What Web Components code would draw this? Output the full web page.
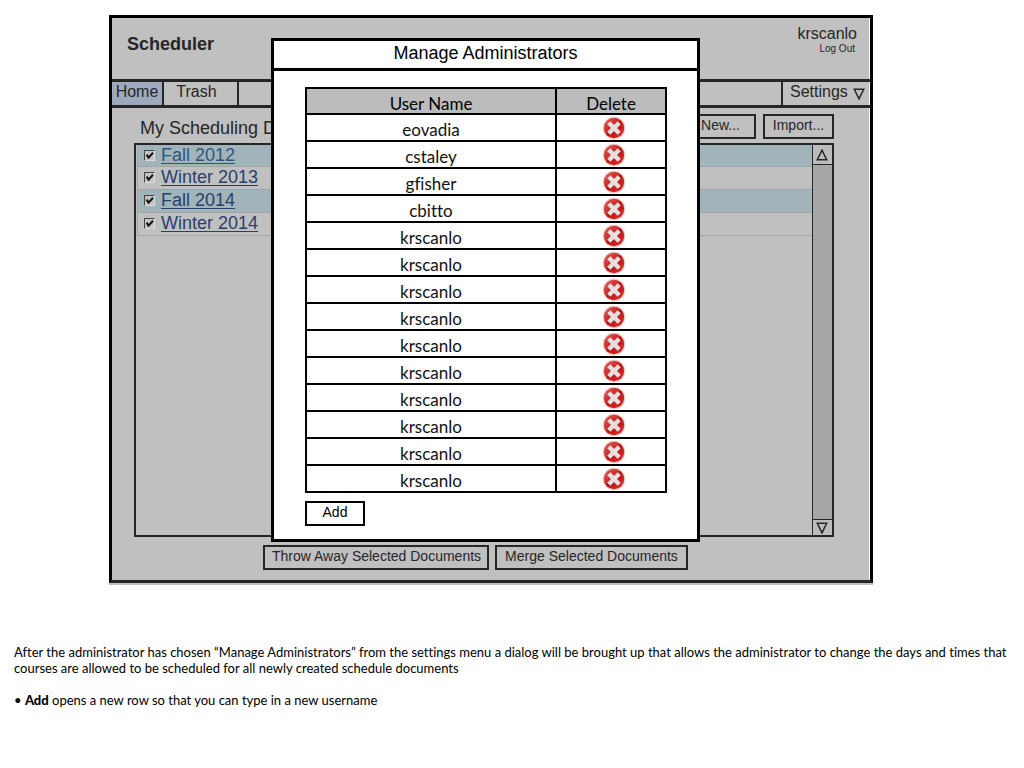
<!DOCTYPE html>
<html lang="en">
<head>
<meta charset="utf-8">
<meta name="viewport" content="width=device-width, initial-scale=1">
<title>Scheduler</title>
<style>
  body { margin: 0; background: #fff; font-family: "Liberation Sans", Arial, sans-serif; }
</style>
</head>
<body>
<scheduler-page></scheduler-page>

<script>
const define = (name, html, setup) => {
  const tpl = document.createElement('template');
  tpl.innerHTML = html;
  customElements.define(name, class extends HTMLElement {
    constructor() {
      super();
      this.attachShadow({ mode: 'open' }).append(tpl.content.cloneNode(true));
    }
    connectedCallback() { if (setup) setup(this, this.shadowRoot); }
  });
};

/* Square outlined push button */
define('box-button', `
<style>
  :host { display: block; }
  button { display: block; box-sizing: border-box; width: 100%; height: 25px; margin: 0; padding: 0 7px 2px;
    border: 2px solid var(--line, #262626); border-radius: 0; background: none; color: inherit;
    font: 14px/19px "Liberation Sans", Arial, sans-serif; white-space: nowrap; }
</style>
<button type="button"><slot></slot></button>`);

/* Triangle used by the menu and the scroll bar */
define('tri-mark', `
<style>
  :host { display: block; width: 12px; height: 12px; }
  :host([up]) svg { transform: rotate(180deg); }
  svg { display: block; width: 100%; height: 100%; }
</style>
<svg viewBox="0 0 12 12" aria-hidden="true"><path d="M1.3 1.3h9.4L6 10.9z" fill="none" stroke="#262626" stroke-width="1.5"/></svg>`);

define('app-header', `
<style>
  :host { display: flex; justify-content: space-between; height: 61px; box-sizing: border-box; padding: 7px 13px 0 15px; color: #262626; }
  h1 { margin: 9px 0 0; font-size: 18px; line-height: 20px; }
  .user { text-align: right; font-size: 16px; line-height: 18px; }
  a { display: block; padding-right: 2px; font-size: 10px; line-height: 12px; color: inherit; text-decoration: none; }
</style>
<h1>Scheduler</h1>
<div class="user">krscanlo<a href="#logout">Log Out</a></div>`);

define('app-nav', `
<style>
  :host { display: flex; height: 23px; border: solid #262626; border-width: 3px 0; font-size: 16px; line-height: 20px; }
  a { box-sizing: border-box; color: #262626; text-decoration: none; text-align: center; border-right: 2px solid #262626; }
  .home { width: 52px; background: #9fa9be; }
  .trash { width: 75px; padding-right: 8px; }
  .settings { display: flex; gap: 5px; margin-left: auto; width: 89px; padding-left: 7px; border-left: 2px solid #262626; border-right: 0; }
  tri-mark { margin-top: 6px; }
</style>
<a class="home" href="#home">Home</a>
<a class="trash" href="#trash">Trash</a>
<a class="settings" href="#settings">Settings<tri-mark></tri-mark></a>`);

define('doc-row', `
<style>
  :host { display: flex; box-sizing: border-box; margin-left: 1px; padding-left: 6px; border: solid #a4a4a4; border-width: 0 0 1px 1px; gap: 6px; }
  :host(:nth-of-type(odd)) { background: #a1b4ba; }
  .tick { display: grid; width: 11px; height: 11px; margin-top: 5px; }
  .tick > * { grid-area: 1 / 1; }
  input { appearance: none; width: 11px; height: 11px; margin: 0; box-sizing: border-box; background: #c4c4c4;
    border: 1px solid; border-color: #444 #ddd #ddd #444; }
  svg { width: 11px; height: 11px; pointer-events: none; }
  label { color: #27406c; font-size: 18px; line-height: 20px; }
  a { color: inherit; text-decoration: underline; text-decoration-thickness: 1px; text-underline-offset: 2px; }
  :host(:first-of-type) a { color: #2c5680; }
</style>
<span class="tick"><input type="checkbox" id="c" checked aria-labelledby="name">
<svg viewBox="0 0 11 11" aria-hidden="true"><path d="M2.6 4.6l2 3L9 2.8" fill="none" stroke="#111" stroke-width="2"/></svg></span>
<label id="name" for="c"><a href="#doc"><slot></slot></a></label>`);

define('doc-list', `
<style>
  :host { display: flex; box-sizing: border-box; height: 394px; border: 2px solid #262626; }
  .rows { flex: 1; display: grid; grid-template-rows: 22px; grid-auto-rows: 23px; }
  .bar { display: flex; flex-direction: column; justify-content: space-between; width: 19px; border-left: 1px solid #262626; background: #a6a6a6; }
  .end { display: grid; place-items: center; height: 19px; background: #bcbcbc; border-bottom: 1px solid #262626; padding-right: 2px; }
  .end.down { height: 15px; border: solid #262626; border-width: 1px 0 0; }
</style>
<div class="rows"><slot></slot></div>
<div class="bar"><div class="end"><tri-mark up></tri-mark></div><div class="end down"><tri-mark></tri-mark></div></div>`);

define('delete-button', `
<style>
  :host { display: block; }
  button { display: block; width: 24px; height: 24px; margin: 0; padding: 0; border: 0; background: none; }
  svg { display: block; width: 24px; height: 24px; }
</style>
<button type="button" aria-label="Delete user">
<svg viewBox="0 0 24 24" aria-hidden="true">
  <defs><linearGradient id="g" x1="0" y1="0" x2="1" y2="1"><stop offset="0" stop-color="#de6660"/><stop offset=".42" stop-color="#cf2929"/><stop offset=".5" stop-color="#b91316"/><stop offset="1" stop-color="#f0302e"/></linearGradient></defs>
  <circle cx="12" cy="12" r="11.4" fill="#e6d3cf"/>
  <circle cx="12" cy="12" r="10.2" fill="url(#g)"/>
  <path d="M6.8 6.8l10.4 10.4M17.2 6.8l-10.4 10.4" stroke="#e3e0e0" stroke-width="4.4"/>
</svg></button>`);

define('admin-table', `
<style>
  :host { display: block; }
  table { width: 100%; border-collapse: collapse; table-layout: fixed; font: 17px/20px Lato, sans-serif; font-variant-ligatures: none; color: #111; }
  th, td { box-sizing: border-box; height: 27px; padding: 5px 0 0; border: 2px solid #000; font-weight: 400; text-align: center; }
  th { background: #bcbcbc; color: #000; height: 26px; line-height: 19px; }
  .del { width: 110px; }
  td.del { padding: 0; }
  delete-button { width: 24px; margin: 0 auto; padding-left: 6px; }
</style>
<table><thead><tr><th scope="col">User Name</th><th scope="col" class="del">Delete</th></tr></thead><tbody></tbody></table>`,
(host, root) => {
  root.querySelector('tbody').innerHTML = host.getAttribute('users').split(' ')
    .map(u => `<tr><td>${u}</td><td class="del"><delete-button></delete-button></td></tr>`).join('');
});

define('app-dialog', `
<style>
  :host { display: block; box-sizing: border-box; border: 3px solid #000; background: #fff; color: #000; }
  h2 { margin: 0; height: 27px; border-bottom: 3px solid #000; font-size: 18px; line-height: 24px; font-weight: 400; text-align: center; }
  .body { padding: 16px 30px 13px 31px; }
  box-button { width: 60px; margin-top: 8px; --line: #000; }
</style>
<section role="dialog" aria-labelledby="t">
  <h2 id="t">Manage Administrators</h2>
  <div class="body"><slot></slot><box-button>Add</box-button></div>
</section>`);

define('scheduler-page', `
<style>
  :host { display: block; }
  .frame { position: relative; margin: 15px 151px 0 109px; border: 3px solid #000; border-bottom-color: #262626;
    background: #c0c0c0; box-shadow: inset -1px 0 #fff, 0 2px #c0c0c0; color: #262626; }
  main { padding: 6px 36px 10px 22px; }
  .top { display: flex; gap: 7px; height: 29px; }
  h2 { flex: 1; margin: 4px 0 0 6px; font-size: 18px; line-height: 20px; font-weight: 400; }
  .new { width: 71px; }
  .import { width: 71px; }
  .actions { display: flex; justify-content: center; gap: 6px; padding: 8px 17px 0 0; }
  .throw { width: 226px; }
  .merge { width: 193px; }
  app-dialog { position: absolute; top: 20px; left: 159px; right: 170px; }
  .notes { margin: 61px 14px 0; color: #000; font: 13px/16px Lato, sans-serif; font-variant-ligatures: none; }
  p { margin: 0 0 16px; }
  b { font-weight: 900; }
</style>
<div class="frame">
  <app-header></app-header>
  <app-nav></app-nav>
  <main>
    <div class="top"><h2>My Scheduling Documents</h2><box-button class="new">New...</box-button><box-button class="import">Import...</box-button></div>
    <doc-list><doc-row>Fall 2012</doc-row><doc-row>Winter 2013</doc-row><doc-row>Fall 2014</doc-row><doc-row>Winter 2014</doc-row></doc-list>
    <div class="actions"><box-button class="throw">Throw Away Selected Documents</box-button><box-button class="merge">Merge Selected Documents</box-button></div>
  </main>
  <app-dialog><admin-table users="eovadia cstaley gfisher cbitto krscanlo krscanlo krscanlo krscanlo krscanlo krscanlo krscanlo krscanlo krscanlo krscanlo"></admin-table></app-dialog>
</div>
<div class="notes">
  <p>After the administrator has chosen “Manage Administrators” from the settings menu a dialog will be brought up that allows the administrator to change the days and times that courses are allowed to be scheduled for all newly created schedule documents</p>
  <p>• <b>Add</b> opens a new row so that you can type in a new username</p>
</div>`);
</script>
</body>
</html>
